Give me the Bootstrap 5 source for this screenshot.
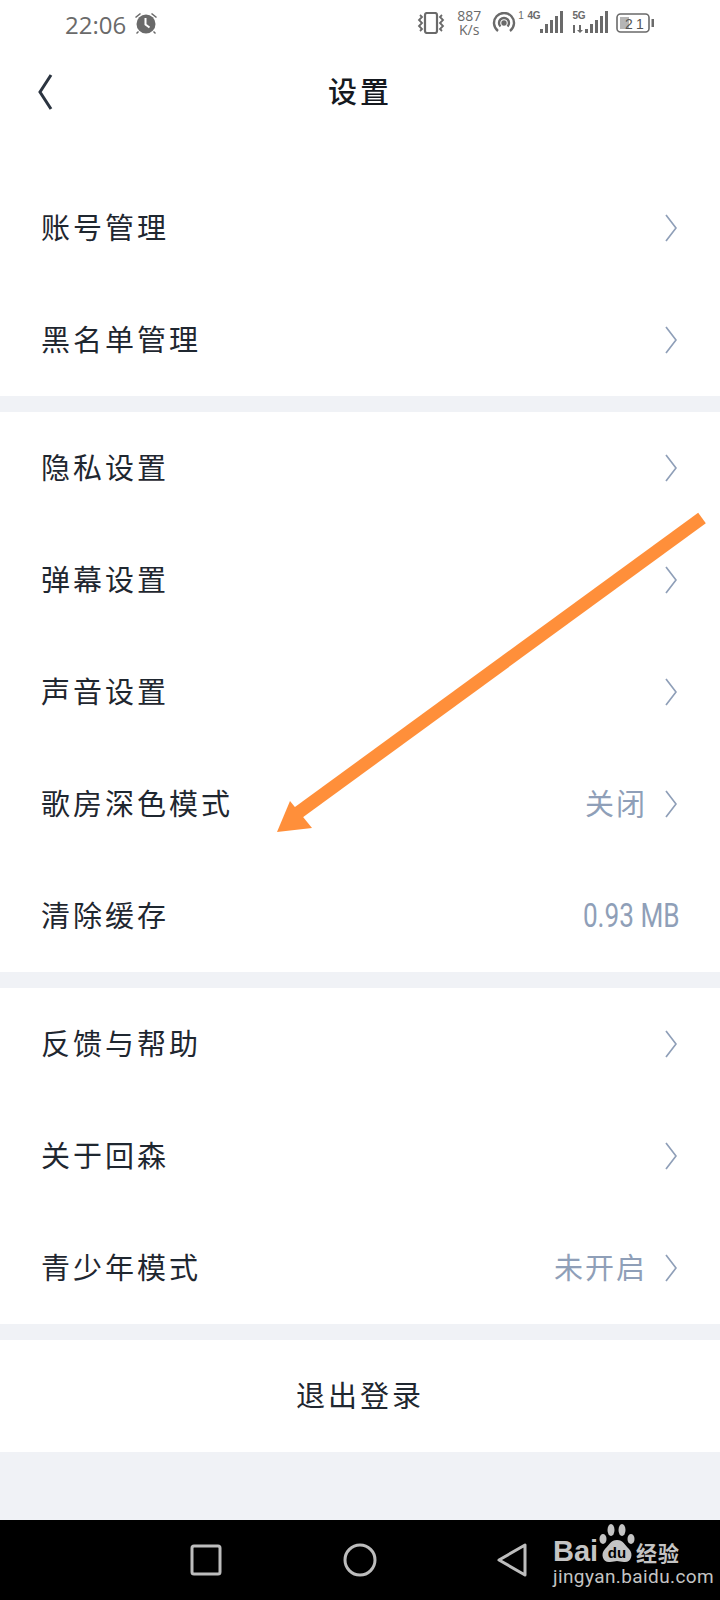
<!DOCTYPE html>
<html lang="zh-CN">
<head>
    <meta charset="UTF-8">
    <title>设置</title>
    <link href="https://cdn.jsdelivr.net/npm/bootstrap@5.3.3/dist/css/bootstrap.min.css" rel="stylesheet">
    <script src="https://cdn.jsdelivr.net/npm/bootstrap@5.3.3/dist/js/bootstrap.bundle.min.js"></script>
    <style>
        body { width: 720px; height: 1600px; overflow: hidden; background: #f0f2f6; position: relative;
            font-family: "Noto Sans CJK SC", "Liberation Sans", sans-serif; color: #1f2730; }
        .phone-page { height: 1600px; }
        .status-strip { height: 46px; padding: 0 0 0 65px; color: #6a6a6a; }
        .clock-text { font-family: "Open Sans", sans-serif; font-size: 24px; font-weight: 400; line-height: 1; margin-top: 3px; }
        .speed-text { font-family: "Open Sans", sans-serif; font-size: 14px; line-height: 14px; text-align: center; width: 26px; }
        .tiny-text { font-family: "Liberation Sans", sans-serif; font-weight: 700; font-size: 10px; line-height: 1; letter-spacing: -.3px; }
        .title-strip { height: 92px; position: relative; }
        .page-title { font-size: 29px; letter-spacing: 3px; font-weight: 500; color: #15191f; margin-top: -2px; }
        .back-btn { position: absolute; left: 38px; top: 27px; }
        .settings-list { border-radius: 0; }
        .settings-list .list-group-item { height: 112px; padding: 0 43px 2px 41px; border: 0; background: #fff;
            font-size: 29px; letter-spacing: 3px; color: #1f2730; }
        .settings-list svg { margin-top: 2px; }
        .first-list { padding-top: 34px; background: #fff; }
        .value-text { color: #8f9fb8; letter-spacing: 2px; margin-right: 18px; font-size: 29px; }
        .size-text { color: #8f9fb8; font-family: "Roboto", sans-serif; font-size: 34px; letter-spacing: 0; margin-right: -3px; transform: scaleX(.77); transform-origin: right center; }
        .sep-a { height: 16px; }
        .logout-row { height: 112px; padding-bottom: 2px; background: #fff; font-size: 29px; letter-spacing: 3px; }
        .soft-keys { height: 80px; background: #000; position: absolute; left: 0; right: 0; bottom: 0; }
        .soft-key { position: absolute; top: 23px; }
        .baidu-mark { position: absolute; left: 553px; top: 3px; width: 130px; height: 66px; color: #c4c4c4; }
        .baidu-word { position: absolute; left: 0; top: 14px; font-family: "Liberation Sans", sans-serif; font-weight: 700; font-size: 29px; line-height: 1; }
        .baidu-cn { position: absolute; left: 83px; top: 19px; font-size: 21px; line-height: 1; letter-spacing: 1px; font-weight: 700; }
        .baidu-url { position: absolute; left: 0; top: 44px; font-family: "Roboto", sans-serif; font-size: 19px; line-height: 1; letter-spacing: .4px; white-space: nowrap; }
        .paw-mark { position: absolute; left: 45px; top: 0; }
        .arrow-over { position: absolute; left: 0; top: 0; pointer-events: none; }
    </style>
</head>
<body>
<div class="phone-page d-flex flex-column">
    <!-- status bar -->
    <div class="status-strip d-flex align-items-center bg-white">
        <span class="clock-text">22:06</span>
        <svg class="ms-2" width="24" height="24" viewBox="0 0 24 24" fill="#6a6a6a">
            <circle cx="12" cy="13" r="9.500"/>
            <path d="M1 6l5-4 1 1-5 4zM23 6l-5-4-1 1 5 4zM4 20l-2 2 1 1 2-2zM20 20l2 2-1 1-2-2z"/>
            <path d="M11.500 7v6.500l4 3" stroke="#fff" stroke-width="2" fill="none"/>
        </svg>
        <div class="d-flex align-items-center" style="margin-left:258px">
            <svg width="30" height="22" viewBox="0 0 30 22" fill="none" stroke="#6a6a6a" stroke-width="2">
                <rect x="9" y="1" width="12" height="20" rx="2" stroke-width="2.200"/>
                <path d="M4 3l2 2-3 3 3 3-3 3 3 3-2 2M26 3l-2 2 3 3-3 3 3 3-3 3 2 2" stroke-width="1.800"/>
            </svg>
            <div class="speed-text" style="margin-left:10px">887<br>K/s</div>
            <svg style="margin-left:10px" width="24" height="22" viewBox="0 0 24 22" fill="none" stroke="#6a6a6a" stroke-width="2.400">
                <path d="M6 19a10 10 0 1 1 12 0"/>
                <path d="M8.500 14.500a5 5 0 1 1 7 0"/>
                <circle cx="12" cy="11" r="1.500" fill="#6a6a6a"/>
            </svg>
            <span class="tiny-text" style="font-weight:400;margin:-14px 0 0 2px">1</span>
            <div class="d-flex align-items-start" style="margin-left:4px;width:36px;height:24px;position:relative">
                <span class="tiny-text">4G</span>
                <svg style="position:absolute;left:13px;top:0" width="23" height="22" viewBox="0 0 23 22" fill="#6a6a6a">
                    <rect x="0" y="18" width="3" height="4"/><rect x="5" y="13" width="3" height="9"/><rect x="10" y="9" width="3" height="13"/><rect x="15" y="5" width="3" height="17"/><rect x="20" y="0" width="3" height="22"/>
                </svg>
            </div>
            <div class="d-flex flex-column" style="margin-left:9px;width:36px;height:24px;position:relative">
                <span class="tiny-text">5G</span>
                <svg style="position:absolute;left:0;top:0" width="36" height="22" viewBox="0 0 36 22" fill="#6a6a6a">
                    <rect x="1" y="14" width="2" height="8"/><path d="M5 14h2v5h2l-3 3-3-3h2z" transform="translate(2 0)"/>
                    <rect x="13" y="18" width="3" height="4"/><rect x="18" y="13" width="3" height="9"/><rect x="23" y="9" width="3" height="13"/><rect x="28" y="5" width="3" height="17"/><rect x="33" y="0" width="3" height="22"/>
                </svg>
            </div>
            <svg style="margin-left:8px" width="38" height="20" viewBox="0 0 38 20">
                <rect x="1" y="1" width="32" height="18" rx="3.500" fill="none" stroke="#6a6a6a" stroke-width="1.600"/>
                <rect x="4" y="4" width="9" height="12" fill="#b5b5b5"/>
                <text x="9" y="15.500" font-family="Liberation Sans" font-size="14" fill="#555">2</text>
                <text x="20" y="15.500" font-family="Liberation Sans" font-size="14" fill="#555">1</text>
                <rect x="35.500" y="6" width="2.500" height="8" fill="#6a6a6a"/>
            </svg>
        </div>
    </div>

    <!-- title -->
    <div class="title-strip d-flex align-items-center justify-content-center bg-white">
        <svg class="back-btn" width="16" height="38" viewBox="0 0 16 38" fill="none" stroke="#2b3440" stroke-width="3">
            <path d="M13 2L2 19l11 17"/>
        </svg>
        <span class="page-title">设置</span>
    </div>

    <!-- first group -->
    <div class="first-list">
        <div class="list-group settings-list">
            <div class="list-group-item d-flex align-items-center justify-content-between"><span>账号管理</span><svg width="12" height="28" viewBox="0 0 12 28" fill="none" stroke="#8f9fb8" stroke-width="1.700"><path d="M1 1l10 13L1 27"/></svg></div>
            <div class="list-group-item d-flex align-items-center justify-content-between"><span>黑名单管理</span><svg width="12" height="28" viewBox="0 0 12 28" fill="none" stroke="#8f9fb8" stroke-width="1.700"><path d="M1 1l10 13L1 27"/></svg></div>
        </div>
    </div>
    <div class="sep-a"></div>

    <div class="list-group settings-list">
        <div class="list-group-item d-flex align-items-center justify-content-between"><span>隐私设置</span><svg width="12" height="28" viewBox="0 0 12 28" fill="none" stroke="#8f9fb8" stroke-width="1.700"><path d="M1 1l10 13L1 27"/></svg></div>
        <div class="list-group-item d-flex align-items-center justify-content-between"><span>弹幕设置</span><svg width="12" height="28" viewBox="0 0 12 28" fill="none" stroke="#8f9fb8" stroke-width="1.700"><path d="M1 1l10 13L1 27"/></svg></div>
        <div class="list-group-item d-flex align-items-center justify-content-between"><span>声音设置</span><svg width="12" height="28" viewBox="0 0 12 28" fill="none" stroke="#8f9fb8" stroke-width="1.700"><path d="M1 1l10 13L1 27"/></svg></div>
        <div class="list-group-item d-flex align-items-center justify-content-between"><span>歌房深色模式</span><span class="d-flex align-items-center"><span class="value-text">关闭</span><svg width="12" height="28" viewBox="0 0 12 28" fill="none" stroke="#8f9fb8" stroke-width="1.700"><path d="M1 1l10 13L1 27"/></svg></span></div>
        <div class="list-group-item d-flex align-items-center justify-content-between"><span>清除缓存</span><span class="size-text">0.93 MB</span></div>
    </div>
    <div class="sep-a"></div>

    <div class="list-group settings-list">
        <div class="list-group-item d-flex align-items-center justify-content-between"><span>反馈与帮助</span><svg width="12" height="28" viewBox="0 0 12 28" fill="none" stroke="#8f9fb8" stroke-width="1.700"><path d="M1 1l10 13L1 27"/></svg></div>
        <div class="list-group-item d-flex align-items-center justify-content-between"><span>关于回森</span><svg width="12" height="28" viewBox="0 0 12 28" fill="none" stroke="#8f9fb8" stroke-width="1.700"><path d="M1 1l10 13L1 27"/></svg></div>
        <div class="list-group-item d-flex align-items-center justify-content-between"><span>青少年模式</span><span class="d-flex align-items-center"><span class="value-text">未开启</span><svg width="12" height="28" viewBox="0 0 12 28" fill="none" stroke="#8f9fb8" stroke-width="1.700"><path d="M1 1l10 13L1 27"/></svg></span></div>
    </div>
    <div class="sep-a"></div>

    <div class="logout-row d-flex align-items-center justify-content-center">退出登录</div>
</div>

<!-- soft keys -->
<div class="soft-keys">
    <svg class="soft-key" style="left:190px" width="32" height="34" viewBox="0 0 32 34" fill="none" stroke="#bdbdbd" stroke-width="3"><rect x="2" y="3" width="28" height="28" rx="2"/></svg>
    <svg class="soft-key" style="left:343px" width="34" height="34" viewBox="0 0 34 34" fill="none" stroke="#bdbdbd" stroke-width="3"><circle cx="17" cy="17" r="15"/></svg>
    <svg class="soft-key" style="left:497px" width="31" height="34" viewBox="0 0 31 34" fill="none" stroke="#bdbdbd" stroke-width="3" stroke-linejoin="round"><path d="M28 2v30L2 17z"/></svg>
    <div class="baidu-mark">
        <span class="baidu-word">Bai</span>
        <svg class="paw-mark" width="38" height="42" viewBox="0 0 38 42" fill="#c4c4c4">
            <ellipse cx="13" cy="7" rx="3.500" ry="6"/><ellipse cx="24" cy="7" rx="3.500" ry="6"/>
            <ellipse cx="5" cy="16" rx="3.500" ry="5"/><ellipse cx="33" cy="16" rx="3.500" ry="5"/>
            <path d="M19 17c6 0 8 5 12 9 5 5 2 14-5 13-3 0-5-1-7-1s-4 1-7 1c-7 1-10-8-5-13 4-4 6-9 12-9z"/>
            <text x="19" y="35" text-anchor="middle" font-family="Liberation Sans" font-weight="700" font-size="15" fill="#000">du</text>
        </svg>
        <span class="baidu-cn">经验</span>
        <span class="baidu-url">jingyan.baidu.com</span>
    </div>
</div>

<!-- orange annotation arrow over the list -->
<svg class="arrow-over" width="720" height="1600" viewBox="0 0 720 1600">
    <path d="M702 518L295 815" stroke="#ff8f3a" stroke-width="13" fill="none"/>
    <path d="M277 832L290 801 312 828z" fill="#ff8f3a"/>
</svg>
</body>
</html>
